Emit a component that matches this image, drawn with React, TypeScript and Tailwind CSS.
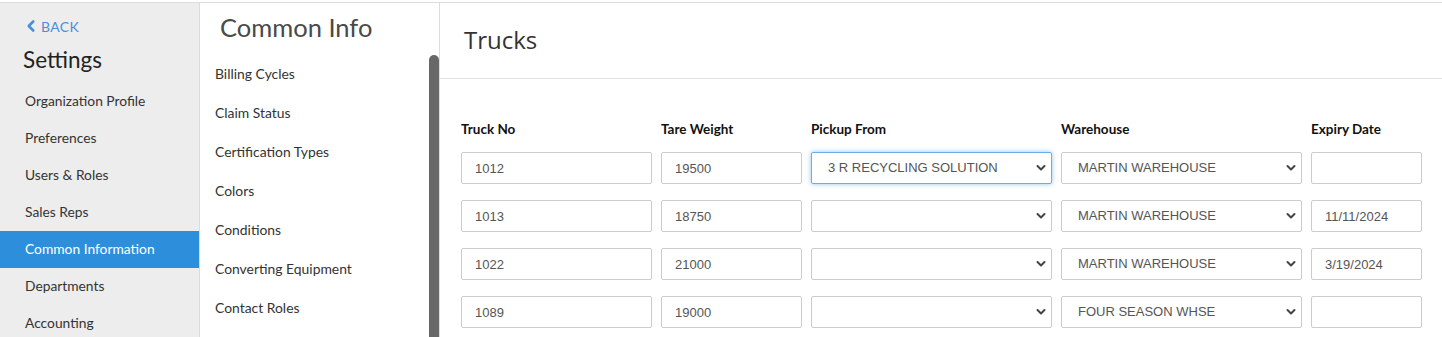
import React from 'react';
import { ChevronLeft } from 'lucide-react';

const settingsNav = [
  'Organization Profile',
  'Preferences',
  'Users & Roles',
  'Sales Reps',
  'Common Information',
  'Departments',
  'Accounting',
];

const commonInfoNav = [
  'Billing Cycles',
  'Claim Status',
  'Certification Types',
  'Colors',
  'Conditions',
  'Converting Equipment',
  'Contact Roles',
];

interface TruckRow {
  truckNo: string;
  tare: string;
  pickup: string;
  warehouse: string;
  expiry: string;
  focused?: boolean;
}

const trucks: TruckRow[] = [
  { truckNo: '1012', tare: '19500', pickup: '3 R RECYCLING SOLUTION', warehouse: 'MARTIN WAREHOUSE', expiry: '', focused: true },
  { truckNo: '1013', tare: '18750', pickup: '', warehouse: 'MARTIN WAREHOUSE', expiry: '11/11/2024' },
  { truckNo: '1022', tare: '21000', pickup: '', warehouse: 'MARTIN WAREHOUSE', expiry: '3/19/2024' },
  { truckNo: '1089', tare: '19000', pickup: '', warehouse: 'FOUR SEASON WHSE', expiry: '' },
];

const proxima = { fontFamily: 'Lato, "Noto Sans", sans-serif' };

const Chevron = () => (
  <svg
    className="pointer-events-none absolute right-[6px] top-1/2 -translate-y-1/2"
    width="10"
    height="7"
    viewBox="0 0 10 7"
  >
    <path d="M1.5 1.5 L5 5 L8.5 1.5" fill="none" stroke="#444" strokeWidth="2" strokeLinecap="round" strokeLinejoin="round" />
  </svg>
);

const TextField = ({ value }: { value: string }) => (
  <input
    readOnly
    value={value}
    className="h-[32px] w-full rounded-[2px] border border-[#cccccc] bg-white pl-[13px] text-[13px] text-[#555] outline-none font-['Liberation_Sans',Arial,sans-serif]"
  />
);

const SelectField = ({ value, focused }: { value: string; focused?: boolean }) => (
  <div className="relative h-[32px] w-full">
    <select
      value={value}
      onChange={() => {}}
      className={`h-full w-full appearance-none rounded-[2px] border bg-white pl-[16px] text-[13px] text-[#555] outline-none font-['Liberation_Sans',Arial,sans-serif] ${
        focused ? 'border-[#66afe9] shadow-[0_0_5px_rgba(102,175,233,0.7)]' : 'border-[#cccccc]'
      }`}
    >
      <option value={value}>{value}</option>
    </select>
    <Chevron />
  </div>
);

export default function App() {
  return (
    <div className="h-[337px] w-[1442px] overflow-hidden bg-white">
      <div className="h-[2px] bg-white" />
      <div className="flex h-[335px] border-t border-[#dddddd]">
        {/* settings sidebar */}
        <aside className="w-[200px] shrink-0 border-r border-[#dcdcdc] bg-[#ededed]" style={proxima}>
          <div className="flex h-[20px] items-center pl-[24px] mt-[13px] text-[14px] text-[#4a90d9] tracking-[0.3px]">
            <ChevronLeft size={18} strokeWidth={3.5} className="mr-[1px] -ml-[2px]" />
            BACK
          </div>
          <div className="mt-[9px] h-[30px] pl-[23px] text-[22.5px] leading-[30px] text-[#222]">Settings</div>
          <nav className="mt-[8px]">
            {settingsNav.map((item) => (
              <div
                key={item}
                className={`flex h-[37px] items-center pl-[25px] text-[13.8px] ${
                  item === 'Common Information' ? 'bg-[#2d8fdc] text-white' : 'text-[#333]'
                }`}
              >
                {item}
              </div>
            ))}
          </nav>
        </aside>

        {/* common info list */}
        <section className="relative w-[240px] shrink-0 border-r border-[#dddddd]" style={proxima}>
          <h2 className="mt-[8px] h-[32px] pl-[20px] text-[25.5px] leading-[32px] font-normal text-[#4a4a4a]">Common Info</h2>
          <ul className="mt-[12px]">
            {commonInfoNav.map((item) => (
              <li key={item} className="flex h-[39px] items-center pl-[15px] text-[13.9px] text-[#333]">
                {item}
              </li>
            ))}
          </ul>
          <div className="absolute right-0 top-[52px] h-[300px] w-[10px] rounded-t-[5px] bg-[#686868]" />
        </section>

        {/* trucks */}
        <main className="flex-1">
          <div className="flex h-[76px] items-center border-b border-[#e2e2e2] pl-[24px] pb-[1px]">
            <h1 className="text-[24px] text-[#333] font-['Open_Sans',sans-serif]">Trucks</h1>
          </div>
          <div
            className="grid grid-cols-[191px_141px_241px_241px_111px] gap-x-[9px] gap-y-[16px] pl-[21px] pt-[42px]"
          >
            {['Truck No', 'Tare Weight', 'Pickup From', 'Warehouse', 'Expiry Date'].map((label) => (
              <div
                key={label}
                className="-mb-[1px] h-[16px] text-[13.5px] leading-[16px] font-bold text-[#111]"
                style={proxima}
              >
                {label}
              </div>
            ))}
            {trucks.map((t) => (
              <React.Fragment key={t.truckNo}>
                <TextField value={t.truckNo} />
                <TextField value={t.tare} />
                <SelectField value={t.pickup} focused={t.focused} />
                <SelectField value={t.warehouse} />
                <TextField value={t.expiry} />
              </React.Fragment>
            ))}
          </div>
        </main>
      </div>
    </div>
  );
}
